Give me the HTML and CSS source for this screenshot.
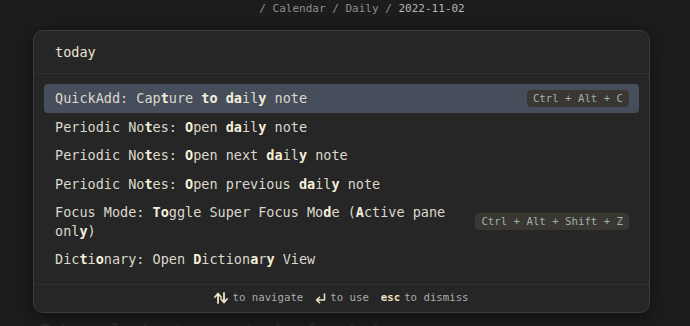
FILE: index.html
```html
<!DOCTYPE html>
<html lang="en">
<head>
    <meta charset="UTF-8" />
    <meta name="viewport" content="width=device-width, initial-scale=1.0" />
    <title>Command palette</title>
    <link rel="stylesheet" href="styles.css">
</head>
<body>
    <div class="app">
        <div class="breadcrumb">
            <span class="crumb">/ Calendar / Daily / </span><span class="current">2022-11-02</span>
        </div>
        <div class="editor">
            <div class="heading">Periodic daily note template for today</div>
            <div class="spacer"></div>
            <div class="line">Take a look at your tasks for today</div>
        </div>

        <div class="modal">
            <div class="promptInput">today</div>
            <div class="results">
                <div class="item selected">
                    <span class="title">QuickAdd: Cap<b>t</b>ure <b>to</b> <b>da</b>il<b>y</b> note</span>
                    <span class="hotkey">Ctrl + Alt + C</span>
                </div>
                <div class="item">
                    <span class="title">Periodic No<b>t</b>es: <b>O</b>pen <b>da</b>il<b>y</b> note</span>
                </div>
                <div class="item">
                    <span class="title">Periodic No<b>t</b>es: <b>O</b>pen next <b>da</b>il<b>y</b> note</span>
                </div>
                <div class="item">
                    <span class="title">Periodic No<b>t</b>es: <b>O</b>pen previous <b>da</b>il<b>y</b> note</span>
                </div>
                <div class="item">
                    <span class="title">Focus Mode: <b>To</b>ggle Super Focus Mo<b>d</b>e (<b>A</b>ctive pane onl<b>y</b>)</span>
                    <span class="hotkey">Ctrl + Alt + Shift + Z</span>
                </div>
                <div class="item">
                    <span class="title">Dic<b>t</b>i<b>o</b>nary: Open <b>D</b>iction<b>a</b>r<b>y</b> View</span>
                </div>
            </div>
            <div class="instructions">
                <span class="instruction">
                    <svg class="icon" width="14" height="12" viewBox="0 0 14 12">
                        <path d="M4 11V2M1 5l3-3.5L7 5" fill="none" stroke="#ede2c4" stroke-width="1.8" stroke-linecap="round" stroke-linejoin="round"/>
                        <path d="M10 1v9M7 7l3 3.5L13 7" fill="none" stroke="#ede2c4" stroke-width="1.8" stroke-linecap="round" stroke-linejoin="round"/>
                    </svg>to navigate
                </span>
                <span class="instruction">
                    <svg class="icon" width="11" height="12" viewBox="0 0 11 12">
                        <path d="M9.5 2v6H2M4.5 5.2L1.5 8l3 2.8" fill="none" stroke="#ede2c4" stroke-width="1.5" stroke-linecap="round" stroke-linejoin="round"/>
                    </svg>to use
                </span>
                <span class="instruction"><span class="key">esc</span>to dismiss</span>
            </div>
        </div>
    </div>
</body>
</html>
```

FILE: styles.css
```css
body {
    margin: 0;
    padding: 0;
    background: #1c1c1c;
    font-family: "DejaVu Sans Mono", "Liberation Mono", monospace;
    color: #dcd8cc;
}
.app {
    position: relative;
    width: 690px;
    height: 326px;
    overflow: hidden;
}
.breadcrumb {
    text-align: center;
    font-size: 11px;
    line-height: 14px;
    padding: 2px 0 0 34px;
    color: #8e8e8e;
}
.breadcrumb .current {
    color: #b4b4b4;
}
.editor {
    padding: 12px 40px 0;
}
.heading {
    color: #3f5a3a;
    font-size: 18px;
    font-weight: bold;
    line-height: 22px;
}
.spacer {
    height: 270px;
}
.line {
    color: #2a2a2a;
    font-size: 17px;
    font-weight: bold;
    line-height: 22px;
}
.modal {
    position: absolute;
    left: 33px;
    top: 30px;
    width: 615px;
    background: #262626;
    border: 1px solid #3c3c3c;
    border-radius: 10px;
    box-shadow: 0 4px 16px rgba(0, 0, 0, 0.45);
}
.promptInput {
    padding: 12px 21px 12px;
    font-size: 13.5px;
    line-height: 18px;
    color: #ece6d4;
    border-bottom: 1px solid #303030;
}
.results {
    padding: 10px 10px;
    border-bottom: 1px solid #303030;
}
.item {
    display: flex;
    align-items: center;
    gap: 12px;
    padding: 5px 10px 5px 11px;
    font-size: 13.5px;
    line-height: 18.5px;
    border-radius: 4px;
}
.item.selected {
    background: #464e5c;
}
.title {
    flex: 1;
}
.title b {
    color: #f7efd9;
}
.hotkey {
    flex-shrink: 0;
    background: #3a3733;
    color: #9fb2ad;
    font-size: 10.7px;
    line-height: 13px;
    padding: 2px 6px;
    border-radius: 4px;
}
.instructions {
    display: flex;
    justify-content: center;
    gap: 12px;
    padding: 6px 0 7px;
    font-size: 10.7px;
    line-height: 14px;
    color: #ababab;
}
.instruction {
    display: flex;
    align-items: center;
}
.icon {
    margin-right: 4px;
}
.key {
    font-weight: bold;
    color: #ede2c4;
    margin-right: 4px;
}
```
